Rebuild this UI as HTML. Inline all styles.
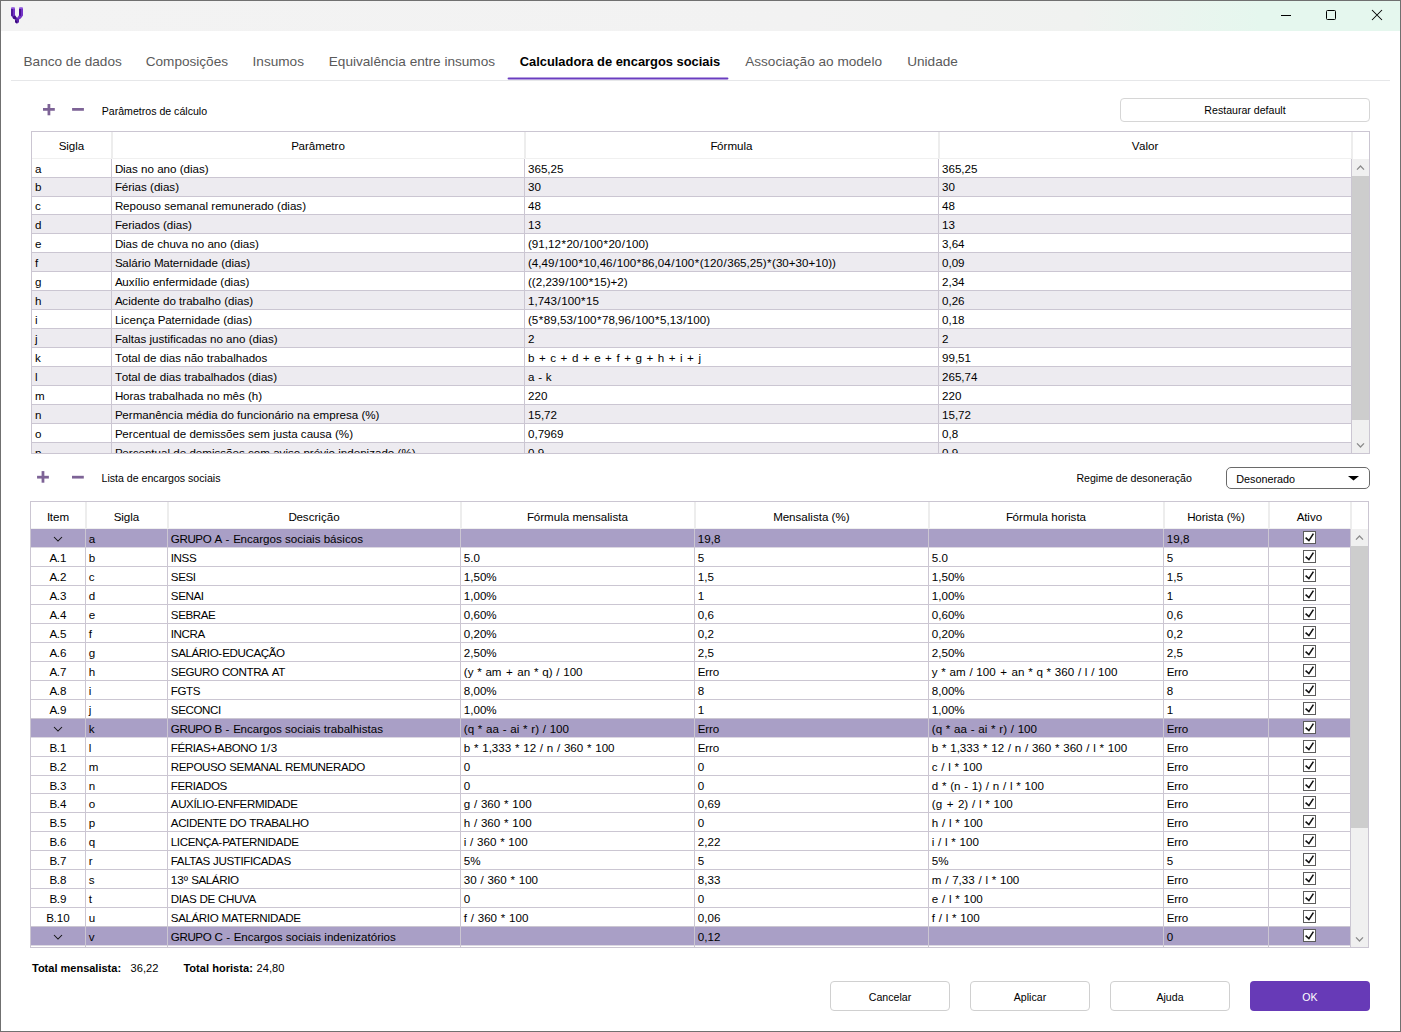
<!DOCTYPE html>
<html><head><meta charset="utf-8"><style>
html,body{margin:0;padding:0;width:1401px;height:1032px;overflow:hidden;background:#fff}
.r{position:absolute;box-sizing:content-box}
.w{padding:0 .5px}
.u{letter-spacing:-.4px}
.p{padding:0 1.3px}
.m{padding:0 .5px}
.t{position:absolute;white-space:nowrap;line-height:20px;font-family:"Liberation Sans", sans-serif}
</style></head><body>
<div class="r" style="left:0px;top:0px;width:1401px;height:1032px;background:#fff;"></div>
<div class="r" style="left:1px;top:1px;width:1399px;height:30px;background:linear-gradient(to right,#f3f3f3 0px,#f2f2f2 800px,#f0f2f0 1080px,#e5f7ee 1260px,#e5f7ee 1399px);"></div>
<div class="r" style="left:0px;top:0px;width:1401px;height:1px;background:#707070;"></div>
<div class="r" style="left:0px;top:1031px;width:1401px;height:1px;background:#707070;"></div>
<div class="r" style="left:0px;top:0px;width:1px;height:1032px;background:#707070;"></div>
<div class="r" style="left:1400px;top:0px;width:1px;height:1032px;background:#707070;"></div>
<svg class="r" style="left:6px;top:3px" width="22" height="24" viewBox="6 3 22 24">
<path d="M11 8.6 Q11 7.2 13 7.2 Q15 7.2 15 8.6 L15 15.2 L17 18 L19 15.2 L19 8.6 Q19 7.2 21 7.2 Q23 7.2 23 8.6 L23 15.6 L20.8 18.6 L19 19.6 L19 22 L17 23.4 L15 22 L15 19.6 L13 18.6 L11 15.6 Z" fill="#7434c6"/>
<path d="M11 9 L13 9 L13 16.4 L11 15.6 Z" fill="#4f1699"/>
<path d="M19 9 L21 9 L21 16 L19 15.6 Z" fill="#4a0f94"/>
<path d="M13 16.5 L15 15.6 L17 18.2 L15.2 19.6 L13 18.6 Z" fill="#3f0d82"/>
<path d="M15.2 19.6 L17 18.2 L19 19.6 L19 22 L17 23.4 L15 22 Z" fill="#5a22a8"/>
<path d="M15 20 L17 21 L17 23.4 L15 22 Z" fill="#3a0a78"/>
<path d="M11 8.6 Q11 7.2 13 7.2 Q15 7.2 15 8.6 Z M19 8.6 Q19 7.2 21 7.2 Q23 7.2 23 8.6 Z" fill="#a878ea"/>
</svg>
<div class="r" style="left:1281px;top:15px;width:10px;height:1px;background:#000;"></div>
<div class="r" style="left:1326px;top:10px;width:8px;height:8px;border:1px solid #000;border-radius:1.5px"></div>
<svg class="r" style="left:1371px;top:9px" width="12" height="12" viewBox="0 0 12 12"><path d="M1 1 L11 11 M11 1 L1 11" stroke="#000" stroke-width="1.05"/></svg>
<div class="t" style="left:23.5px;top:52px;font-size:13.6px;color:#5a5a5a;">Banco de dados</div>
<div class="t" style="left:145.7px;top:52px;font-size:13.6px;color:#5a5a5a;">Composições</div>
<div class="t" style="left:252.6px;top:52px;font-size:13.6px;color:#5a5a5a;">Insumos</div>
<div class="t" style="left:328.8px;top:52px;font-size:13.6px;color:#5a5a5a;">Equivalência entre insumos</div>
<div class="t" style="left:745.2px;top:52px;font-size:13.6px;color:#5a5a5a;">Associação ao modelo</div>
<div class="t" style="left:907.2px;top:52px;font-size:13.6px;color:#5a5a5a;">Unidade</div>
<div class="t" style="left:519.7px;top:52px;font-size:12.9px;color:#000;font-weight:bold;">Calculadora de encargos sociais</div>
<div class="r" style="left:11px;top:80px;width:1379px;height:1px;background:#e6e7e9;"></div>
<svg class="r" style="left:500px;top:70px" width="240" height="16"><line x1="8.6" y1="8.4" x2="227.4" y2="8.4" stroke="#6a3dc0" stroke-width="2.05" stroke-linecap="round"/></svg>
<svg class="r" style="left:42px;top:103px" width="16" height="16"><rect x="1" y="5" width="11.8" height="2.76" fill="#7d6396"/><rect x="5.549999999999997" y="1" width="2.75" height="11.3" fill="#7d6396"/></svg>
<svg class="r" style="left:71px;top:107px" width="16" height="16"><rect x="1.0999999999999943" y="1" width="11.8" height="2.76" fill="#7d6396"/></svg>
<div class="t" style="left:101.7px;top:101px;font-size:10.6px;color:#000;">Parâmetros de cálculo</div>
<div class="r" style="left:1120px;top:98px;width:248px;height:22px;border:1px solid #d6d6d6;border-radius:4px;background:#fff"></div>
<div class="t" style="left:945px;width:600px;text-align:center;top:100px;font-size:10.6px;color:#000;">Restaurar default</div>
<svg class="r" style="left:36px;top:470px" width="16" height="16"><rect x="1.0700000000000003" y="5.800000000000011" width="11.8" height="2.76" fill="#7d6396"/><rect x="5.600000000000001" y="1.1000000000000227" width="2.75" height="11.6" fill="#7d6396"/></svg>
<svg class="r" style="left:71px;top:474px" width="16" height="16"><rect x="1" y="1.8000000000000114" width="11.8" height="2.76" fill="#7d6396"/></svg>
<div class="t" style="left:101.5px;top:468px;font-size:10.6px;color:#000;">Lista de encargos sociais</div>
<div class="t" style="left:1076.4px;top:468px;font-size:10.6px;color:#000;">Regime de desoneração</div>
<div class="r" style="left:1226px;top:467px;width:142px;height:20px;border:1px solid #6a6a6a;border-radius:5px;background:#fff"></div>
<div class="t" style="left:1236.3px;top:469px;font-size:10.8px;color:#000;">Desonerado</div>
<svg class="r" style="left:1347px;top:475px" width="13" height="7" viewBox="0 0 13 7"><path d="M1 1 L12 1 L6.5 5.6 Z" fill="#000"/></svg>
<div class="r" style="left:31px;top:131px;width:1339px;height:323px;overflow:hidden">
<div class="t" style="left:-259.5px;width:600px;text-align:center;top:5px;font-size:11.6px;color:#000;"><span class="u">S</span>igla</div>
<div class="t" style="left:-13.0px;width:600px;text-align:center;top:5px;font-size:11.6px;color:#000;"><span class="u">P</span>arâmetro</div>
<div class="t" style="left:400.5px;width:600px;text-align:center;top:5px;font-size:11.6px;color:#000;"><span class="u">F</span>órmula</div>
<div class="t" style="left:814.0px;width:600px;text-align:center;top:5px;font-size:11.6px;color:#000;"><span class="u">V</span>alor</div>
<div class="r" style="left:80px;top:0px;width:2px;height:28px;background:#ededed;"></div>
<div class="r" style="left:493px;top:0px;width:2px;height:28px;background:#ededed;"></div>
<div class="r" style="left:907px;top:0px;width:2px;height:28px;background:#ededed;"></div>
<div class="r" style="left:1320px;top:0px;width:2px;height:28px;background:#ededed;"></div>
<div class="r" style="left:0px;top:27px;width:1320px;height:1px;background:#f0f0f0;"></div>
<div class="r" style="left:0px;top:46px;width:1320px;height:1px;background:#cbc6d2;"></div>
<div class="t" style="left:4px;top:28px;font-size:11.6px;color:#000;">a</div>
<div class="t" style="left:84px;top:28px;font-size:11.6px;color:#000;"><span class="u">D</span>ias no ano (dias)</div>
<div class="t" style="left:497px;top:28px;font-size:11.6px;color:#000;">365,25</div>
<div class="t" style="left:911px;top:28px;font-size:11.6px;color:#000;">365,25</div>
<div class="r" style="left:0px;top:47px;width:1320px;height:18px;background:#edebf0;"></div>
<div class="r" style="left:0px;top:65px;width:1320px;height:1px;background:#cbc6d2;"></div>
<div class="t" style="left:4px;top:46px;font-size:11.6px;color:#000;">b</div>
<div class="t" style="left:84px;top:46px;font-size:11.6px;color:#000;"><span class="u">F</span>érias (dias)</div>
<div class="t" style="left:497px;top:46px;font-size:11.6px;color:#000;">30</div>
<div class="t" style="left:911px;top:46px;font-size:11.6px;color:#000;">30</div>
<div class="r" style="left:0px;top:83px;width:1320px;height:1px;background:#cbc6d2;"></div>
<div class="t" style="left:4px;top:65px;font-size:11.6px;color:#000;">c</div>
<div class="t" style="left:84px;top:65px;font-size:11.6px;color:#000;"><span class="u">R</span>epouso semanal remunerado (dias)</div>
<div class="t" style="left:497px;top:65px;font-size:11.6px;color:#000;">48</div>
<div class="t" style="left:911px;top:65px;font-size:11.6px;color:#000;">48</div>
<div class="r" style="left:0px;top:84px;width:1320px;height:18px;background:#edebf0;"></div>
<div class="r" style="left:0px;top:102px;width:1320px;height:1px;background:#cbc6d2;"></div>
<div class="t" style="left:4px;top:84px;font-size:11.6px;color:#000;">d</div>
<div class="t" style="left:84px;top:84px;font-size:11.6px;color:#000;"><span class="u">F</span>eriados (dias)</div>
<div class="t" style="left:497px;top:84px;font-size:11.6px;color:#000;">13</div>
<div class="t" style="left:911px;top:84px;font-size:11.6px;color:#000;">13</div>
<div class="r" style="left:0px;top:121px;width:1320px;height:1px;background:#cbc6d2;"></div>
<div class="t" style="left:4px;top:103px;font-size:11.6px;color:#000;">e</div>
<div class="t" style="left:84px;top:103px;font-size:11.6px;color:#000;"><span class="u">D</span>ias de chuva no ano (dias)</div>
<div class="t" style="left:497px;top:103px;font-size:11.6px;color:#000;">(91,12<span class="w">*</span>20<span class="w">/</span>100<span class="w">*</span>20<span class="w">/</span>100)</div>
<div class="t" style="left:911px;top:103px;font-size:11.6px;color:#000;">3,64</div>
<div class="r" style="left:0px;top:122px;width:1320px;height:18px;background:#edebf0;"></div>
<div class="r" style="left:0px;top:140px;width:1320px;height:1px;background:#cbc6d2;"></div>
<div class="t" style="left:4px;top:122px;font-size:11.6px;color:#000;">f</div>
<div class="t" style="left:84px;top:122px;font-size:11.6px;color:#000;"><span class="u">S</span>alário <span class="u">M</span>aternidade (dias)</div>
<div class="t" style="left:497px;top:122px;font-size:11.6px;color:#000;">(4,49<span class="w">/</span>100<span class="w">*</span>10,46<span class="w">/</span>100<span class="w">*</span>86,04<span class="w">/</span>100<span class="w">*</span>(120<span class="w">/</span>365,25)<span class="w">*</span>(30+30+10))</div>
<div class="t" style="left:911px;top:122px;font-size:11.6px;color:#000;">0,09</div>
<div class="r" style="left:0px;top:159px;width:1320px;height:1px;background:#cbc6d2;"></div>
<div class="t" style="left:4px;top:141px;font-size:11.6px;color:#000;">g</div>
<div class="t" style="left:84px;top:141px;font-size:11.6px;color:#000;"><span class="u">A</span>uxílio enfermidade (dias)</div>
<div class="t" style="left:497px;top:141px;font-size:11.6px;color:#000;">((2,239<span class="w">/</span>100<span class="w">*</span>15)+2)</div>
<div class="t" style="left:911px;top:141px;font-size:11.6px;color:#000;">2,34</div>
<div class="r" style="left:0px;top:160px;width:1320px;height:18px;background:#edebf0;"></div>
<div class="r" style="left:0px;top:178px;width:1320px;height:1px;background:#cbc6d2;"></div>
<div class="t" style="left:4px;top:160px;font-size:11.6px;color:#000;">h</div>
<div class="t" style="left:84px;top:160px;font-size:11.6px;color:#000;"><span class="u">A</span>cidente do trabalho (dias)</div>
<div class="t" style="left:497px;top:160px;font-size:11.6px;color:#000;">1,743<span class="w">/</span>100<span class="w">*</span>15</div>
<div class="t" style="left:911px;top:160px;font-size:11.6px;color:#000;">0,26</div>
<div class="r" style="left:0px;top:197px;width:1320px;height:1px;background:#cbc6d2;"></div>
<div class="t" style="left:4px;top:179px;font-size:11.6px;color:#000;">i</div>
<div class="t" style="left:84px;top:179px;font-size:11.6px;color:#000;"><span class="u">L</span>icença <span class="u">P</span>aternidade (dias)</div>
<div class="t" style="left:497px;top:179px;font-size:11.6px;color:#000;">(5<span class="w">*</span>89,53<span class="w">/</span>100<span class="w">*</span>78,96<span class="w">/</span>100<span class="w">*</span>5,13<span class="w">/</span>100)</div>
<div class="t" style="left:911px;top:179px;font-size:11.6px;color:#000;">0,18</div>
<div class="r" style="left:0px;top:198px;width:1320px;height:18px;background:#edebf0;"></div>
<div class="r" style="left:0px;top:216px;width:1320px;height:1px;background:#cbc6d2;"></div>
<div class="t" style="left:4px;top:198px;font-size:11.6px;color:#000;">j</div>
<div class="t" style="left:84px;top:198px;font-size:11.6px;color:#000;"><span class="u">F</span>altas justificadas no ano (dias)</div>
<div class="t" style="left:497px;top:198px;font-size:11.6px;color:#000;">2</div>
<div class="t" style="left:911px;top:198px;font-size:11.6px;color:#000;">2</div>
<div class="r" style="left:0px;top:235px;width:1320px;height:1px;background:#cbc6d2;"></div>
<div class="t" style="left:4px;top:217px;font-size:11.6px;color:#000;">k</div>
<div class="t" style="left:84px;top:217px;font-size:11.6px;color:#000;"><span class="u">T</span>otal de dias não trabalhados</div>
<div class="t" style="left:497px;top:217px;font-size:11.6px;color:#000;">b<span class="p"> + </span>c<span class="p"> + </span>d<span class="p"> + </span>e<span class="p"> + </span>f<span class="p"> + </span>g<span class="p"> + </span>h<span class="p"> + </span>i<span class="p"> + </span>j</div>
<div class="t" style="left:911px;top:217px;font-size:11.6px;color:#000;">99,51</div>
<div class="r" style="left:0px;top:236px;width:1320px;height:18px;background:#edebf0;"></div>
<div class="r" style="left:0px;top:254px;width:1320px;height:1px;background:#cbc6d2;"></div>
<div class="t" style="left:4px;top:236px;font-size:11.6px;color:#000;">l</div>
<div class="t" style="left:84px;top:236px;font-size:11.6px;color:#000;"><span class="u">T</span>otal de dias trabalhados (dias)</div>
<div class="t" style="left:497px;top:236px;font-size:11.6px;color:#000;">a<span class="m"> - </span>k</div>
<div class="t" style="left:911px;top:236px;font-size:11.6px;color:#000;">265,74</div>
<div class="r" style="left:0px;top:273px;width:1320px;height:1px;background:#cbc6d2;"></div>
<div class="t" style="left:4px;top:255px;font-size:11.6px;color:#000;">m</div>
<div class="t" style="left:84px;top:255px;font-size:11.6px;color:#000;"><span class="u">H</span>oras trabalhada no mês (h)</div>
<div class="t" style="left:497px;top:255px;font-size:11.6px;color:#000;">220</div>
<div class="t" style="left:911px;top:255px;font-size:11.6px;color:#000;">220</div>
<div class="r" style="left:0px;top:274px;width:1320px;height:18px;background:#edebf0;"></div>
<div class="r" style="left:0px;top:292px;width:1320px;height:1px;background:#cbc6d2;"></div>
<div class="t" style="left:4px;top:274px;font-size:11.6px;color:#000;">n</div>
<div class="t" style="left:84px;top:274px;font-size:11.6px;color:#000;"><span class="u">P</span>ermanência média do funcionário na empresa (%)</div>
<div class="t" style="left:497px;top:274px;font-size:11.6px;color:#000;">15,72</div>
<div class="t" style="left:911px;top:274px;font-size:11.6px;color:#000;">15,72</div>
<div class="r" style="left:0px;top:311px;width:1320px;height:1px;background:#cbc6d2;"></div>
<div class="t" style="left:4px;top:293px;font-size:11.6px;color:#000;">o</div>
<div class="t" style="left:84px;top:293px;font-size:11.6px;color:#000;"><span class="u">P</span>ercentual de demissões sem justa causa (%)</div>
<div class="t" style="left:497px;top:293px;font-size:11.6px;color:#000;">0,7969</div>
<div class="t" style="left:911px;top:293px;font-size:11.6px;color:#000;">0,8</div>
<div class="r" style="left:0px;top:312px;width:1320px;height:18px;background:#edebf0;"></div>
<div class="r" style="left:0px;top:330px;width:1320px;height:1px;background:#cbc6d2;"></div>
<div class="t" style="left:4px;top:312px;font-size:11.6px;color:#000;">p</div>
<div class="t" style="left:84px;top:312px;font-size:11.6px;color:#000;"><span class="u">P</span>ercentual de demissões com aviso prévio indenizado (%)</div>
<div class="t" style="left:497px;top:312px;font-size:11.6px;color:#000;">0,9</div>
<div class="t" style="left:911px;top:312px;font-size:11.6px;color:#000;">0,9</div>
<div class="r" style="left:80px;top:28px;width:1px;height:300px;background:#cbc6d2;"></div>
<div class="r" style="left:493px;top:28px;width:1px;height:300px;background:#cbc6d2;"></div>
<div class="r" style="left:907px;top:28px;width:1px;height:300px;background:#cbc6d2;"></div>
<div class="r" style="left:1320px;top:28px;width:1px;height:300px;background:#cbc6d2;"></div>
<div class="r" style="left:1321px;top:28px;width:17px;height:300px;background:#f0f0f0;"></div>
<div class="r" style="left:1321px;top:45px;width:17px;height:244px;background:#cdcdcd;"></div>
</div>
<div class="r" style="left:31px;top:131px;width:1337px;height:321px;border:1px solid #cbc6d2"></div>
<svg class="r" style="left:1356px;top:164px" width="9" height="7" viewBox="0 0 9 7"><path d="M1 5.6 L4.5 2 L8 5.6" fill="none" stroke="#8a8a8a" stroke-width="1.3"/></svg>
<svg class="r" style="left:1356px;top:442px" width="9" height="7" viewBox="0 0 9 7"><path d="M1 1.4 L4.5 5 L8 1.4" fill="none" stroke="#8a8a8a" stroke-width="1.3"/></svg>
<div class="r" style="left:30px;top:501px;width:1339px;height:447px;overflow:hidden">
<div class="t" style="left:-272.0px;width:600px;text-align:center;top:6px;font-size:11.6px;color:#000;"><span class="u">I</span>tem</div>
<div class="t" style="left:-203.5px;width:600px;text-align:center;top:6px;font-size:11.6px;color:#000;"><span class="u">S</span>igla</div>
<div class="t" style="left:-16.0px;width:600px;text-align:center;top:6px;font-size:11.6px;color:#000;"><span class="u">D</span>escrição</div>
<div class="t" style="left:247.5px;width:600px;text-align:center;top:6px;font-size:11.6px;color:#000;"><span class="u">F</span>órmula mensalista</div>
<div class="t" style="left:481.5px;width:600px;text-align:center;top:6px;font-size:11.6px;color:#000;"><span class="u">M</span>ensalista (%)</div>
<div class="t" style="left:716.0px;width:600px;text-align:center;top:6px;font-size:11.6px;color:#000;"><span class="u">F</span>órmula horista</div>
<div class="t" style="left:886.0px;width:600px;text-align:center;top:6px;font-size:11.6px;color:#000;"><span class="u">H</span>orista (%)</div>
<div class="t" style="left:979.5px;width:600px;text-align:center;top:6px;font-size:11.6px;color:#000;"><span class="u">A</span>tivo</div>
<div class="r" style="left:55px;top:0px;width:2px;height:28px;background:#ededed;"></div>
<div class="r" style="left:137px;top:0px;width:2px;height:28px;background:#ededed;"></div>
<div class="r" style="left:430px;top:0px;width:2px;height:28px;background:#ededed;"></div>
<div class="r" style="left:664px;top:0px;width:2px;height:28px;background:#ededed;"></div>
<div class="r" style="left:898px;top:0px;width:2px;height:28px;background:#ededed;"></div>
<div class="r" style="left:1133px;top:0px;width:2px;height:28px;background:#ededed;"></div>
<div class="r" style="left:1238px;top:0px;width:2px;height:28px;background:#ededed;"></div>
<div class="r" style="left:1320px;top:0px;width:2px;height:28px;background:#ededed;"></div>
<div class="r" style="left:1px;top:27px;width:1319px;height:1px;background:#efefef;"></div>
<div class="r" style="left:1px;top:28px;width:1319px;height:18px;background:#a99fc6;"></div>
<svg class="r" style="left:23px;top:35px" width="10" height="7" viewBox="0 0 10 7"><path d="M1 1 L5 5 L9 1" fill="none" stroke="#111" stroke-width="1.05"/></svg>
<div class="r" style="left:1px;top:46px;width:1319px;height:1px;background:#dcd8e2;"></div>
<div class="t" style="left:58.8px;top:28px;font-size:11.6px;color:#000;">a</div>
<div class="t" style="left:140.8px;top:28px;font-size:11.6px;color:#000;"><span class="u">GRUPO</span> <span class="u">A</span><span class="m"> - </span><span class="u">E</span>ncargos sociais básicos</div>
<div class="t" style="left:667.8px;top:28px;font-size:11.6px;color:#000;">19,8</div>
<div class="t" style="left:1136.8px;top:28px;font-size:11.6px;color:#000;">19,8</div>
<div class="r" style="left:1273px;top:30px;width:11px;height:11px;border:1px solid #5c5c5c;background:#fff"></div>
<svg class="r" style="left:1273px;top:30px" width="13" height="13" viewBox="0 0 13 13"><path d="M2.6 6.6 L5.9 9.6 L10.4 2.6" fill="none" stroke="#111" stroke-width="1.6"/></svg>
<div class="t" style="left:-272.0px;width:600px;text-align:center;top:47px;font-size:11.6px;color:#000;"><span class="u">A</span>.1</div>
<div class="r" style="left:1px;top:65px;width:1319px;height:1px;background:#cbc6d2;"></div>
<div class="t" style="left:58.8px;top:47px;font-size:11.6px;color:#000;">b</div>
<div class="t" style="left:140.8px;top:47px;font-size:11.6px;color:#000;"><span class="u">INSS</span></div>
<div class="t" style="left:433.8px;top:47px;font-size:11.6px;color:#000;">5.0</div>
<div class="t" style="left:667.8px;top:47px;font-size:11.6px;color:#000;">5</div>
<div class="t" style="left:901.8px;top:47px;font-size:11.6px;color:#000;">5.0</div>
<div class="t" style="left:1136.8px;top:47px;font-size:11.6px;color:#000;">5</div>
<div class="r" style="left:1273px;top:49px;width:11px;height:11px;border:1px solid #5c5c5c;background:#fff"></div>
<svg class="r" style="left:1273px;top:49px" width="13" height="13" viewBox="0 0 13 13"><path d="M2.6 6.6 L5.9 9.6 L10.4 2.6" fill="none" stroke="#111" stroke-width="1.6"/></svg>
<div class="t" style="left:-272.0px;width:600px;text-align:center;top:66px;font-size:11.6px;color:#000;"><span class="u">A</span>.2</div>
<div class="r" style="left:1px;top:84px;width:1319px;height:1px;background:#cbc6d2;"></div>
<div class="t" style="left:58.8px;top:66px;font-size:11.6px;color:#000;">c</div>
<div class="t" style="left:140.8px;top:66px;font-size:11.6px;color:#000;"><span class="u">SESI</span></div>
<div class="t" style="left:433.8px;top:66px;font-size:11.6px;color:#000;">1,50%</div>
<div class="t" style="left:667.8px;top:66px;font-size:11.6px;color:#000;">1,5</div>
<div class="t" style="left:901.8px;top:66px;font-size:11.6px;color:#000;">1,50%</div>
<div class="t" style="left:1136.8px;top:66px;font-size:11.6px;color:#000;">1,5</div>
<div class="r" style="left:1273px;top:68px;width:11px;height:11px;border:1px solid #5c5c5c;background:#fff"></div>
<svg class="r" style="left:1273px;top:68px" width="13" height="13" viewBox="0 0 13 13"><path d="M2.6 6.6 L5.9 9.6 L10.4 2.6" fill="none" stroke="#111" stroke-width="1.6"/></svg>
<div class="t" style="left:-272.0px;width:600px;text-align:center;top:85px;font-size:11.6px;color:#000;"><span class="u">A</span>.3</div>
<div class="r" style="left:1px;top:103px;width:1319px;height:1px;background:#cbc6d2;"></div>
<div class="t" style="left:58.8px;top:85px;font-size:11.6px;color:#000;">d</div>
<div class="t" style="left:140.8px;top:85px;font-size:11.6px;color:#000;"><span class="u">SENAI</span></div>
<div class="t" style="left:433.8px;top:85px;font-size:11.6px;color:#000;">1,00%</div>
<div class="t" style="left:667.8px;top:85px;font-size:11.6px;color:#000;">1</div>
<div class="t" style="left:901.8px;top:85px;font-size:11.6px;color:#000;">1,00%</div>
<div class="t" style="left:1136.8px;top:85px;font-size:11.6px;color:#000;">1</div>
<div class="r" style="left:1273px;top:87px;width:11px;height:11px;border:1px solid #5c5c5c;background:#fff"></div>
<svg class="r" style="left:1273px;top:87px" width="13" height="13" viewBox="0 0 13 13"><path d="M2.6 6.6 L5.9 9.6 L10.4 2.6" fill="none" stroke="#111" stroke-width="1.6"/></svg>
<div class="t" style="left:-272.0px;width:600px;text-align:center;top:104px;font-size:11.6px;color:#000;"><span class="u">A</span>.4</div>
<div class="r" style="left:1px;top:122px;width:1319px;height:1px;background:#cbc6d2;"></div>
<div class="t" style="left:58.8px;top:104px;font-size:11.6px;color:#000;">e</div>
<div class="t" style="left:140.8px;top:104px;font-size:11.6px;color:#000;"><span class="u">SEBRAE</span></div>
<div class="t" style="left:433.8px;top:104px;font-size:11.6px;color:#000;">0,60%</div>
<div class="t" style="left:667.8px;top:104px;font-size:11.6px;color:#000;">0,6</div>
<div class="t" style="left:901.8px;top:104px;font-size:11.6px;color:#000;">0,60%</div>
<div class="t" style="left:1136.8px;top:104px;font-size:11.6px;color:#000;">0,6</div>
<div class="r" style="left:1273px;top:106px;width:11px;height:11px;border:1px solid #5c5c5c;background:#fff"></div>
<svg class="r" style="left:1273px;top:106px" width="13" height="13" viewBox="0 0 13 13"><path d="M2.6 6.6 L5.9 9.6 L10.4 2.6" fill="none" stroke="#111" stroke-width="1.6"/></svg>
<div class="t" style="left:-272.0px;width:600px;text-align:center;top:123px;font-size:11.6px;color:#000;"><span class="u">A</span>.5</div>
<div class="r" style="left:1px;top:141px;width:1319px;height:1px;background:#cbc6d2;"></div>
<div class="t" style="left:58.8px;top:123px;font-size:11.6px;color:#000;">f</div>
<div class="t" style="left:140.8px;top:123px;font-size:11.6px;color:#000;"><span class="u">INCRA</span></div>
<div class="t" style="left:433.8px;top:123px;font-size:11.6px;color:#000;">0,20%</div>
<div class="t" style="left:667.8px;top:123px;font-size:11.6px;color:#000;">0,2</div>
<div class="t" style="left:901.8px;top:123px;font-size:11.6px;color:#000;">0,20%</div>
<div class="t" style="left:1136.8px;top:123px;font-size:11.6px;color:#000;">0,2</div>
<div class="r" style="left:1273px;top:125px;width:11px;height:11px;border:1px solid #5c5c5c;background:#fff"></div>
<svg class="r" style="left:1273px;top:125px" width="13" height="13" viewBox="0 0 13 13"><path d="M2.6 6.6 L5.9 9.6 L10.4 2.6" fill="none" stroke="#111" stroke-width="1.6"/></svg>
<div class="t" style="left:-272.0px;width:600px;text-align:center;top:142px;font-size:11.6px;color:#000;"><span class="u">A</span>.6</div>
<div class="r" style="left:1px;top:160px;width:1319px;height:1px;background:#cbc6d2;"></div>
<div class="t" style="left:58.8px;top:142px;font-size:11.6px;color:#000;">g</div>
<div class="t" style="left:140.8px;top:142px;font-size:11.6px;color:#000;"><span class="u">SALÁRIO</span>-<span class="u">EDUCAÇÃO</span></div>
<div class="t" style="left:433.8px;top:142px;font-size:11.6px;color:#000;">2,50%</div>
<div class="t" style="left:667.8px;top:142px;font-size:11.6px;color:#000;">2,5</div>
<div class="t" style="left:901.8px;top:142px;font-size:11.6px;color:#000;">2,50%</div>
<div class="t" style="left:1136.8px;top:142px;font-size:11.6px;color:#000;">2,5</div>
<div class="r" style="left:1273px;top:144px;width:11px;height:11px;border:1px solid #5c5c5c;background:#fff"></div>
<svg class="r" style="left:1273px;top:144px" width="13" height="13" viewBox="0 0 13 13"><path d="M2.6 6.6 L5.9 9.6 L10.4 2.6" fill="none" stroke="#111" stroke-width="1.6"/></svg>
<div class="t" style="left:-272.0px;width:600px;text-align:center;top:161px;font-size:11.6px;color:#000;"><span class="u">A</span>.7</div>
<div class="r" style="left:1px;top:179px;width:1319px;height:1px;background:#cbc6d2;"></div>
<div class="t" style="left:58.8px;top:161px;font-size:11.6px;color:#000;">h</div>
<div class="t" style="left:140.8px;top:161px;font-size:11.6px;color:#000;"><span class="u">SEGURO</span> <span class="u">CONTRA</span> <span class="u">AT</span></div>
<div class="t" style="left:433.8px;top:161px;font-size:11.6px;color:#000;">(y <span class="w">*</span> am<span class="p"> + </span>an <span class="w">*</span> q) <span class="w">/</span> 100</div>
<div class="t" style="left:667.8px;top:161px;font-size:11.6px;color:#000;"><span class="u">E</span>rro</div>
<div class="t" style="left:901.8px;top:161px;font-size:11.6px;color:#000;">y <span class="w">*</span> am <span class="w">/</span> 100<span class="p"> + </span>an <span class="w">*</span> q <span class="w">*</span> 360 <span class="w">/</span> l <span class="w">/</span> 100</div>
<div class="t" style="left:1136.8px;top:161px;font-size:11.6px;color:#000;"><span class="u">E</span>rro</div>
<div class="r" style="left:1273px;top:163px;width:11px;height:11px;border:1px solid #5c5c5c;background:#fff"></div>
<svg class="r" style="left:1273px;top:163px" width="13" height="13" viewBox="0 0 13 13"><path d="M2.6 6.6 L5.9 9.6 L10.4 2.6" fill="none" stroke="#111" stroke-width="1.6"/></svg>
<div class="t" style="left:-272.0px;width:600px;text-align:center;top:180px;font-size:11.6px;color:#000;"><span class="u">A</span>.8</div>
<div class="r" style="left:1px;top:198px;width:1319px;height:1px;background:#cbc6d2;"></div>
<div class="t" style="left:58.8px;top:180px;font-size:11.6px;color:#000;">i</div>
<div class="t" style="left:140.8px;top:180px;font-size:11.6px;color:#000;"><span class="u">FGTS</span></div>
<div class="t" style="left:433.8px;top:180px;font-size:11.6px;color:#000;">8,00%</div>
<div class="t" style="left:667.8px;top:180px;font-size:11.6px;color:#000;">8</div>
<div class="t" style="left:901.8px;top:180px;font-size:11.6px;color:#000;">8,00%</div>
<div class="t" style="left:1136.8px;top:180px;font-size:11.6px;color:#000;">8</div>
<div class="r" style="left:1273px;top:182px;width:11px;height:11px;border:1px solid #5c5c5c;background:#fff"></div>
<svg class="r" style="left:1273px;top:182px" width="13" height="13" viewBox="0 0 13 13"><path d="M2.6 6.6 L5.9 9.6 L10.4 2.6" fill="none" stroke="#111" stroke-width="1.6"/></svg>
<div class="t" style="left:-272.0px;width:600px;text-align:center;top:199px;font-size:11.6px;color:#000;"><span class="u">A</span>.9</div>
<div class="r" style="left:1px;top:217px;width:1319px;height:1px;background:#cbc6d2;"></div>
<div class="t" style="left:58.8px;top:199px;font-size:11.6px;color:#000;">j</div>
<div class="t" style="left:140.8px;top:199px;font-size:11.6px;color:#000;"><span class="u">SECONCI</span></div>
<div class="t" style="left:433.8px;top:199px;font-size:11.6px;color:#000;">1,00%</div>
<div class="t" style="left:667.8px;top:199px;font-size:11.6px;color:#000;">1</div>
<div class="t" style="left:901.8px;top:199px;font-size:11.6px;color:#000;">1,00%</div>
<div class="t" style="left:1136.8px;top:199px;font-size:11.6px;color:#000;">1</div>
<div class="r" style="left:1273px;top:201px;width:11px;height:11px;border:1px solid #5c5c5c;background:#fff"></div>
<svg class="r" style="left:1273px;top:201px" width="13" height="13" viewBox="0 0 13 13"><path d="M2.6 6.6 L5.9 9.6 L10.4 2.6" fill="none" stroke="#111" stroke-width="1.6"/></svg>
<div class="r" style="left:1px;top:218px;width:1319px;height:18px;background:#a99fc6;"></div>
<svg class="r" style="left:23px;top:225px" width="10" height="7" viewBox="0 0 10 7"><path d="M1 1 L5 5 L9 1" fill="none" stroke="#111" stroke-width="1.05"/></svg>
<div class="r" style="left:1px;top:236px;width:1319px;height:1px;background:#dcd8e2;"></div>
<div class="t" style="left:58.8px;top:218px;font-size:11.6px;color:#000;">k</div>
<div class="t" style="left:140.8px;top:218px;font-size:11.6px;color:#000;"><span class="u">GRUPO</span> <span class="u">B</span><span class="m"> - </span><span class="u">E</span>ncargos sociais trabalhistas</div>
<div class="t" style="left:433.8px;top:218px;font-size:11.6px;color:#000;">(q <span class="w">*</span> aa<span class="m"> - </span>ai <span class="w">*</span> r) <span class="w">/</span> 100</div>
<div class="t" style="left:667.8px;top:218px;font-size:11.6px;color:#000;"><span class="u">E</span>rro</div>
<div class="t" style="left:901.8px;top:218px;font-size:11.6px;color:#000;">(q <span class="w">*</span> aa<span class="m"> - </span>ai <span class="w">*</span> r) <span class="w">/</span> 100</div>
<div class="t" style="left:1136.8px;top:218px;font-size:11.6px;color:#000;"><span class="u">E</span>rro</div>
<div class="r" style="left:1273px;top:220px;width:11px;height:11px;border:1px solid #5c5c5c;background:#fff"></div>
<svg class="r" style="left:1273px;top:220px" width="13" height="13" viewBox="0 0 13 13"><path d="M2.6 6.6 L5.9 9.6 L10.4 2.6" fill="none" stroke="#111" stroke-width="1.6"/></svg>
<div class="t" style="left:-272.0px;width:600px;text-align:center;top:237px;font-size:11.6px;color:#000;"><span class="u">B</span>.1</div>
<div class="r" style="left:1px;top:255px;width:1319px;height:1px;background:#cbc6d2;"></div>
<div class="t" style="left:58.8px;top:237px;font-size:11.6px;color:#000;">l</div>
<div class="t" style="left:140.8px;top:237px;font-size:11.6px;color:#000;"><span class="u">FÉRIAS</span>+<span class="u">ABONO</span> 1<span class="w">/</span>3</div>
<div class="t" style="left:433.8px;top:237px;font-size:11.6px;color:#000;">b <span class="w">*</span> 1,333 <span class="w">*</span> 12 <span class="w">/</span> n <span class="w">/</span> 360 <span class="w">*</span> 100</div>
<div class="t" style="left:667.8px;top:237px;font-size:11.6px;color:#000;"><span class="u">E</span>rro</div>
<div class="t" style="left:901.8px;top:237px;font-size:11.6px;color:#000;">b <span class="w">*</span> 1,333 <span class="w">*</span> 12 <span class="w">/</span> n <span class="w">/</span> 360 <span class="w">*</span> 360 <span class="w">/</span> l <span class="w">*</span> 100</div>
<div class="t" style="left:1136.8px;top:237px;font-size:11.6px;color:#000;"><span class="u">E</span>rro</div>
<div class="r" style="left:1273px;top:239px;width:11px;height:11px;border:1px solid #5c5c5c;background:#fff"></div>
<svg class="r" style="left:1273px;top:239px" width="13" height="13" viewBox="0 0 13 13"><path d="M2.6 6.6 L5.9 9.6 L10.4 2.6" fill="none" stroke="#111" stroke-width="1.6"/></svg>
<div class="t" style="left:-272.0px;width:600px;text-align:center;top:256px;font-size:11.6px;color:#000;"><span class="u">B</span>.2</div>
<div class="r" style="left:1px;top:274px;width:1319px;height:1px;background:#cbc6d2;"></div>
<div class="t" style="left:58.8px;top:256px;font-size:11.6px;color:#000;">m</div>
<div class="t" style="left:140.8px;top:256px;font-size:11.6px;color:#000;"><span class="u">REPOUSO</span> <span class="u">SEMANAL</span> <span class="u">REMUNERADO</span></div>
<div class="t" style="left:433.8px;top:256px;font-size:11.6px;color:#000;">0</div>
<div class="t" style="left:667.8px;top:256px;font-size:11.6px;color:#000;">0</div>
<div class="t" style="left:901.8px;top:256px;font-size:11.6px;color:#000;">c <span class="w">/</span> l <span class="w">*</span> 100</div>
<div class="t" style="left:1136.8px;top:256px;font-size:11.6px;color:#000;"><span class="u">E</span>rro</div>
<div class="r" style="left:1273px;top:258px;width:11px;height:11px;border:1px solid #5c5c5c;background:#fff"></div>
<svg class="r" style="left:1273px;top:258px" width="13" height="13" viewBox="0 0 13 13"><path d="M2.6 6.6 L5.9 9.6 L10.4 2.6" fill="none" stroke="#111" stroke-width="1.6"/></svg>
<div class="t" style="left:-272.0px;width:600px;text-align:center;top:275px;font-size:11.6px;color:#000;"><span class="u">B</span>.3</div>
<div class="r" style="left:1px;top:292px;width:1319px;height:1px;background:#cbc6d2;"></div>
<div class="t" style="left:58.8px;top:275px;font-size:11.6px;color:#000;">n</div>
<div class="t" style="left:140.8px;top:275px;font-size:11.6px;color:#000;"><span class="u">FERIADOS</span></div>
<div class="t" style="left:433.8px;top:275px;font-size:11.6px;color:#000;">0</div>
<div class="t" style="left:667.8px;top:275px;font-size:11.6px;color:#000;">0</div>
<div class="t" style="left:901.8px;top:275px;font-size:11.6px;color:#000;">d <span class="w">*</span> (n<span class="m"> - </span>1) <span class="w">/</span> n <span class="w">/</span> l <span class="w">*</span> 100</div>
<div class="t" style="left:1136.8px;top:275px;font-size:11.6px;color:#000;"><span class="u">E</span>rro</div>
<div class="r" style="left:1273px;top:277px;width:11px;height:11px;border:1px solid #5c5c5c;background:#fff"></div>
<svg class="r" style="left:1273px;top:277px" width="13" height="13" viewBox="0 0 13 13"><path d="M2.6 6.6 L5.9 9.6 L10.4 2.6" fill="none" stroke="#111" stroke-width="1.6"/></svg>
<div class="t" style="left:-272.0px;width:600px;text-align:center;top:293px;font-size:11.6px;color:#000;"><span class="u">B</span>.4</div>
<div class="r" style="left:1px;top:311px;width:1319px;height:1px;background:#cbc6d2;"></div>
<div class="t" style="left:58.8px;top:293px;font-size:11.6px;color:#000;">o</div>
<div class="t" style="left:140.8px;top:293px;font-size:11.6px;color:#000;"><span class="u">AUXÍLIO</span>-<span class="u">ENFERMIDADE</span></div>
<div class="t" style="left:433.8px;top:293px;font-size:11.6px;color:#000;">g <span class="w">/</span> 360 <span class="w">*</span> 100</div>
<div class="t" style="left:667.8px;top:293px;font-size:11.6px;color:#000;">0,69</div>
<div class="t" style="left:901.8px;top:293px;font-size:11.6px;color:#000;">(g<span class="p"> + </span>2) <span class="w">/</span> l <span class="w">*</span> 100</div>
<div class="t" style="left:1136.8px;top:293px;font-size:11.6px;color:#000;"><span class="u">E</span>rro</div>
<div class="r" style="left:1273px;top:295px;width:11px;height:11px;border:1px solid #5c5c5c;background:#fff"></div>
<svg class="r" style="left:1273px;top:295px" width="13" height="13" viewBox="0 0 13 13"><path d="M2.6 6.6 L5.9 9.6 L10.4 2.6" fill="none" stroke="#111" stroke-width="1.6"/></svg>
<div class="t" style="left:-272.0px;width:600px;text-align:center;top:312px;font-size:11.6px;color:#000;"><span class="u">B</span>.5</div>
<div class="r" style="left:1px;top:330px;width:1319px;height:1px;background:#cbc6d2;"></div>
<div class="t" style="left:58.8px;top:312px;font-size:11.6px;color:#000;">p</div>
<div class="t" style="left:140.8px;top:312px;font-size:11.6px;color:#000;"><span class="u">ACIDENTE</span> <span class="u">DO</span> <span class="u">TRABALHO</span></div>
<div class="t" style="left:433.8px;top:312px;font-size:11.6px;color:#000;">h <span class="w">/</span> 360 <span class="w">*</span> 100</div>
<div class="t" style="left:667.8px;top:312px;font-size:11.6px;color:#000;">0</div>
<div class="t" style="left:901.8px;top:312px;font-size:11.6px;color:#000;">h <span class="w">/</span> l <span class="w">*</span> 100</div>
<div class="t" style="left:1136.8px;top:312px;font-size:11.6px;color:#000;"><span class="u">E</span>rro</div>
<div class="r" style="left:1273px;top:314px;width:11px;height:11px;border:1px solid #5c5c5c;background:#fff"></div>
<svg class="r" style="left:1273px;top:314px" width="13" height="13" viewBox="0 0 13 13"><path d="M2.6 6.6 L5.9 9.6 L10.4 2.6" fill="none" stroke="#111" stroke-width="1.6"/></svg>
<div class="t" style="left:-272.0px;width:600px;text-align:center;top:331px;font-size:11.6px;color:#000;"><span class="u">B</span>.6</div>
<div class="r" style="left:1px;top:349px;width:1319px;height:1px;background:#cbc6d2;"></div>
<div class="t" style="left:58.8px;top:331px;font-size:11.6px;color:#000;">q</div>
<div class="t" style="left:140.8px;top:331px;font-size:11.6px;color:#000;"><span class="u">LICENÇA</span>-<span class="u">PATERNIDADE</span></div>
<div class="t" style="left:433.8px;top:331px;font-size:11.6px;color:#000;">i <span class="w">/</span> 360 <span class="w">*</span> 100</div>
<div class="t" style="left:667.8px;top:331px;font-size:11.6px;color:#000;">2,22</div>
<div class="t" style="left:901.8px;top:331px;font-size:11.6px;color:#000;">i <span class="w">/</span> l <span class="w">*</span> 100</div>
<div class="t" style="left:1136.8px;top:331px;font-size:11.6px;color:#000;"><span class="u">E</span>rro</div>
<div class="r" style="left:1273px;top:333px;width:11px;height:11px;border:1px solid #5c5c5c;background:#fff"></div>
<svg class="r" style="left:1273px;top:333px" width="13" height="13" viewBox="0 0 13 13"><path d="M2.6 6.6 L5.9 9.6 L10.4 2.6" fill="none" stroke="#111" stroke-width="1.6"/></svg>
<div class="t" style="left:-272.0px;width:600px;text-align:center;top:350px;font-size:11.6px;color:#000;"><span class="u">B</span>.7</div>
<div class="r" style="left:1px;top:368px;width:1319px;height:1px;background:#cbc6d2;"></div>
<div class="t" style="left:58.8px;top:350px;font-size:11.6px;color:#000;">r</div>
<div class="t" style="left:140.8px;top:350px;font-size:11.6px;color:#000;"><span class="u">FALTAS</span> <span class="u">JUSTIFICADAS</span></div>
<div class="t" style="left:433.8px;top:350px;font-size:11.6px;color:#000;">5%</div>
<div class="t" style="left:667.8px;top:350px;font-size:11.6px;color:#000;">5</div>
<div class="t" style="left:901.8px;top:350px;font-size:11.6px;color:#000;">5%</div>
<div class="t" style="left:1136.8px;top:350px;font-size:11.6px;color:#000;">5</div>
<div class="r" style="left:1273px;top:352px;width:11px;height:11px;border:1px solid #5c5c5c;background:#fff"></div>
<svg class="r" style="left:1273px;top:352px" width="13" height="13" viewBox="0 0 13 13"><path d="M2.6 6.6 L5.9 9.6 L10.4 2.6" fill="none" stroke="#111" stroke-width="1.6"/></svg>
<div class="t" style="left:-272.0px;width:600px;text-align:center;top:369px;font-size:11.6px;color:#000;"><span class="u">B</span>.8</div>
<div class="r" style="left:1px;top:387px;width:1319px;height:1px;background:#cbc6d2;"></div>
<div class="t" style="left:58.8px;top:369px;font-size:11.6px;color:#000;">s</div>
<div class="t" style="left:140.8px;top:369px;font-size:11.6px;color:#000;">13º <span class="u">SALÁRIO</span></div>
<div class="t" style="left:433.8px;top:369px;font-size:11.6px;color:#000;">30 <span class="w">/</span> 360 <span class="w">*</span> 100</div>
<div class="t" style="left:667.8px;top:369px;font-size:11.6px;color:#000;">8,33</div>
<div class="t" style="left:901.8px;top:369px;font-size:11.6px;color:#000;">m <span class="w">/</span> 7,33 <span class="w">/</span> l <span class="w">*</span> 100</div>
<div class="t" style="left:1136.8px;top:369px;font-size:11.6px;color:#000;"><span class="u">E</span>rro</div>
<div class="r" style="left:1273px;top:371px;width:11px;height:11px;border:1px solid #5c5c5c;background:#fff"></div>
<svg class="r" style="left:1273px;top:371px" width="13" height="13" viewBox="0 0 13 13"><path d="M2.6 6.6 L5.9 9.6 L10.4 2.6" fill="none" stroke="#111" stroke-width="1.6"/></svg>
<div class="t" style="left:-272.0px;width:600px;text-align:center;top:388px;font-size:11.6px;color:#000;"><span class="u">B</span>.9</div>
<div class="r" style="left:1px;top:406px;width:1319px;height:1px;background:#cbc6d2;"></div>
<div class="t" style="left:58.8px;top:388px;font-size:11.6px;color:#000;">t</div>
<div class="t" style="left:140.8px;top:388px;font-size:11.6px;color:#000;"><span class="u">DIAS</span> <span class="u">DE</span> <span class="u">CHUVA</span></div>
<div class="t" style="left:433.8px;top:388px;font-size:11.6px;color:#000;">0</div>
<div class="t" style="left:667.8px;top:388px;font-size:11.6px;color:#000;">0</div>
<div class="t" style="left:901.8px;top:388px;font-size:11.6px;color:#000;">e <span class="w">/</span> l <span class="w">*</span> 100</div>
<div class="t" style="left:1136.8px;top:388px;font-size:11.6px;color:#000;"><span class="u">E</span>rro</div>
<div class="r" style="left:1273px;top:390px;width:11px;height:11px;border:1px solid #5c5c5c;background:#fff"></div>
<svg class="r" style="left:1273px;top:390px" width="13" height="13" viewBox="0 0 13 13"><path d="M2.6 6.6 L5.9 9.6 L10.4 2.6" fill="none" stroke="#111" stroke-width="1.6"/></svg>
<div class="t" style="left:-272.0px;width:600px;text-align:center;top:407px;font-size:11.6px;color:#000;"><span class="u">B</span>.10</div>
<div class="r" style="left:1px;top:425px;width:1319px;height:1px;background:#cbc6d2;"></div>
<div class="t" style="left:58.8px;top:407px;font-size:11.6px;color:#000;">u</div>
<div class="t" style="left:140.8px;top:407px;font-size:11.6px;color:#000;"><span class="u">SALÁRIO</span> <span class="u">MATERNIDADE</span></div>
<div class="t" style="left:433.8px;top:407px;font-size:11.6px;color:#000;">f <span class="w">/</span> 360 <span class="w">*</span> 100</div>
<div class="t" style="left:667.8px;top:407px;font-size:11.6px;color:#000;">0,06</div>
<div class="t" style="left:901.8px;top:407px;font-size:11.6px;color:#000;">f <span class="w">/</span> l <span class="w">*</span> 100</div>
<div class="t" style="left:1136.8px;top:407px;font-size:11.6px;color:#000;"><span class="u">E</span>rro</div>
<div class="r" style="left:1273px;top:409px;width:11px;height:11px;border:1px solid #5c5c5c;background:#fff"></div>
<svg class="r" style="left:1273px;top:409px" width="13" height="13" viewBox="0 0 13 13"><path d="M2.6 6.6 L5.9 9.6 L10.4 2.6" fill="none" stroke="#111" stroke-width="1.6"/></svg>
<div class="r" style="left:1px;top:426px;width:1319px;height:18px;background:#a99fc6;"></div>
<svg class="r" style="left:23px;top:433px" width="10" height="7" viewBox="0 0 10 7"><path d="M1 1 L5 5 L9 1" fill="none" stroke="#111" stroke-width="1.05"/></svg>
<div class="r" style="left:1px;top:444px;width:1319px;height:1px;background:#dcd8e2;"></div>
<div class="t" style="left:58.8px;top:426px;font-size:11.6px;color:#000;">v</div>
<div class="t" style="left:140.8px;top:426px;font-size:11.6px;color:#000;"><span class="u">GRUPO</span> <span class="u">C</span><span class="m"> - </span><span class="u">E</span>ncargos sociais indenizatórios</div>
<div class="t" style="left:667.8px;top:426px;font-size:11.6px;color:#000;">0,12</div>
<div class="t" style="left:1136.8px;top:426px;font-size:11.6px;color:#000;">0</div>
<div class="r" style="left:1273px;top:428px;width:11px;height:11px;border:1px solid #5c5c5c;background:#fff"></div>
<svg class="r" style="left:1273px;top:428px" width="13" height="13" viewBox="0 0 13 13"><path d="M2.6 6.6 L5.9 9.6 L10.4 2.6" fill="none" stroke="#111" stroke-width="1.6"/></svg>
<div class="r" style="left:55px;top:28px;width:1px;height:420px;background:#cbc6d2;"></div>
<div class="r" style="left:137px;top:28px;width:1px;height:420px;background:#cbc6d2;"></div>
<div class="r" style="left:430px;top:28px;width:1px;height:420px;background:#cbc6d2;"></div>
<div class="r" style="left:664px;top:28px;width:1px;height:420px;background:#cbc6d2;"></div>
<div class="r" style="left:898px;top:28px;width:1px;height:420px;background:#cbc6d2;"></div>
<div class="r" style="left:1133px;top:28px;width:1px;height:420px;background:#cbc6d2;"></div>
<div class="r" style="left:1238px;top:28px;width:1px;height:420px;background:#cbc6d2;"></div>
<div class="r" style="left:1320px;top:28px;width:1px;height:420px;background:#cbc6d2;"></div>
<div class="r" style="left:1321px;top:28px;width:17px;height:420px;background:#f0f0f0;"></div>
<div class="r" style="left:1321px;top:45px;width:17px;height:282px;background:#cdcdcd;"></div>
</div>
<div class="r" style="left:30px;top:501px;width:1337px;height:445px;border:1px solid #cbc6d2"></div>
<svg class="r" style="left:1355px;top:534px" width="9" height="7" viewBox="0 0 9 7"><path d="M1 5.6 L4.5 2 L8 5.6" fill="none" stroke="#8a8a8a" stroke-width="1.3"/></svg>
<svg class="r" style="left:1355px;top:936px" width="9" height="7" viewBox="0 0 9 7"><path d="M1 1.4 L4.5 5 L8 1.4" fill="none" stroke="#8a8a8a" stroke-width="1.3"/></svg>
<div class="t" style="left:32px;top:958px;font-size:11px;color:#000;font-weight:bold;">Total mensalista:</div>
<div class="t" style="left:130.6px;top:958px;font-size:11.1px;color:#000;">36,22</div>
<div class="t" style="left:183.4px;top:958px;font-size:11.1px;color:#000;font-weight:bold;">Total horista:</div>
<div class="t" style="left:256.6px;top:958px;font-size:11.1px;color:#000;">24,80</div>
<div class="r" style="left:830px;top:981px;width:118px;height:28px;border:1px solid #d0d0d0;border-radius:4px;background:#fff"></div>
<div class="t" style="left:590px;width:600px;text-align:center;top:987px;font-size:10.6px;color:#000;">Cancelar</div>
<div class="r" style="left:970px;top:981px;width:118px;height:28px;border:1px solid #d0d0d0;border-radius:4px;background:#fff"></div>
<div class="t" style="left:730px;width:600px;text-align:center;top:987px;font-size:10.6px;color:#000;">Aplicar</div>
<div class="r" style="left:1110px;top:981px;width:118px;height:28px;border:1px solid #d0d0d0;border-radius:4px;background:#fff"></div>
<div class="t" style="left:870px;width:600px;text-align:center;top:987px;font-size:10.6px;color:#000;">Ajuda</div>
<div class="r" style="left:1250px;top:981px;width:120px;height:30px;border-radius:4px;background:#673ab7"></div>
<div class="t" style="left:1010px;width:600px;text-align:center;top:987px;font-size:10.6px;color:#fff;">OK</div>
</body></html>
